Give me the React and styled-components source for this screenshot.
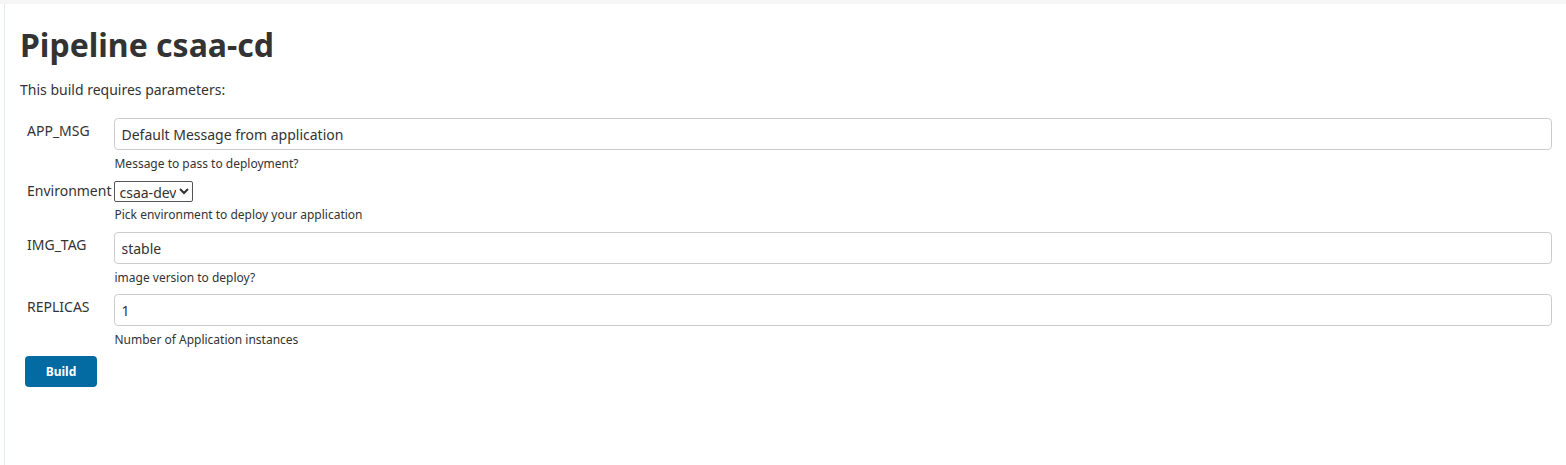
import React from "react";
import styled, { createGlobalStyle } from "styled-components";

const Global = createGlobalStyle`
  html, body { margin: 0; padding: 0; background: #fff; }
  body { font-family: "Noto Sans", "Open Sans", sans-serif; color: #333; }
`;

const Page = styled.div`
  min-height: 465px;
  box-sizing: border-box;
  border-top: 4px solid #f6f6f6;
  display: flex;
`;

const Gutter = styled.div`
  width: 4px;
  flex: none;
`;

const Main = styled.main`
  flex: 1;
  border-left: 1px solid #e3e9ef;
  padding: 0 14px 0 15px;
  min-height: 461px;
`;

const Title = styled.h1`
  font-size: 32px;
  font-weight: 700;
  line-height: 40px;
  margin: 21px 0 0;
  color: #333;
`;

const Intro = styled.p`
  font-size: 14px;
  line-height: 20px;
  margin: 15px 0 0;
`;

const Params = styled.div`
  display: grid;
  grid-template-columns: max-content 1fr;
  column-gap: 3px;
  margin-top: 18px;
`;

const Label = styled.div`
  font-size: 14px;
  line-height: 20px;
  padding: ${(p) => (p.$inline ? "0" : "3px")} 0 0 7px;
`;

const Control = styled.div`
  display: flex;
  flex-direction: column;
  align-items: flex-start;
  margin-bottom: ${(p) => p.$gap}px;
`;

const TextInput = styled.input`
  box-sizing: border-box;
  width: 100%;
  height: 32px;
  border: 1px solid #ccc;
  border-radius: 4px;
  padding: 0 6px;
  font-family: "Noto Sans", sans-serif;
  font-size: 14px;
  color: #333;
  background: #fff;
  outline: none;
`;

const Select = styled.select`
  font-family: "Noto Sans", sans-serif;
  font-size: 14px;
  color: #333;
  height: 21px;
  border: 1px solid #555;
  border-radius: 2px;
  background: #fff;
  padding: 0;
`;

const Help = styled.div`
  font-size: 12px;
  line-height: 16px;
  margin-top: ${(p) => p.$top}px;
  color: #333;
`;

const BuildButton = styled.button`
  margin: 8px 0 0 5px;
  width: 72px;
  height: 31px;
  border: none;
  border-radius: 4px;
  background: #036ba1;
  color: #fff;
  font-family: "Noto Sans", sans-serif;
  font-size: 12px;
  font-weight: 700;
`;

const params = [
  { name: "APP_MSG", value: "Default Message from application", help: "Message to pass to deployment?", gap: 9 },
  { name: "Environment", select: ["csaa-dev"], help: "Pick environment to deploy your application", gap: 9 },
  { name: "IMG_TAG", value: "stable", help: "image version to deploy?", gap: 8 },
  { name: "REPLICAS", value: "1", help: "Number of Application instances", gap: 0 },
];

export default function App() {
  return (
    <>
      <Global />
      <Page>
        <Gutter />
        <Main>
          <Title>Pipeline csaa-cd</Title>
          <Intro>This build requires parameters:</Intro>
          <Params>
            {params.map((p) => (
              <React.Fragment key={p.name}>
                <Label $inline={!!p.select}>{p.name}</Label>
                <Control $gap={p.gap}>
                  {p.select ? (
                    <Select defaultValue={p.select[0]}>
                      {p.select.map((o) => (
                        <option key={o}>{o}</option>
                      ))}
                    </Select>
                  ) : (
                    <TextInput defaultValue={p.value} />
                  )}
                  <Help $top={p.select ? 5 : 6}>{p.help}</Help>
                </Control>
              </React.Fragment>
            ))}
          </Params>
          <BuildButton>Build</BuildButton>
        </Main>
      </Page>
    </>
  );
}
